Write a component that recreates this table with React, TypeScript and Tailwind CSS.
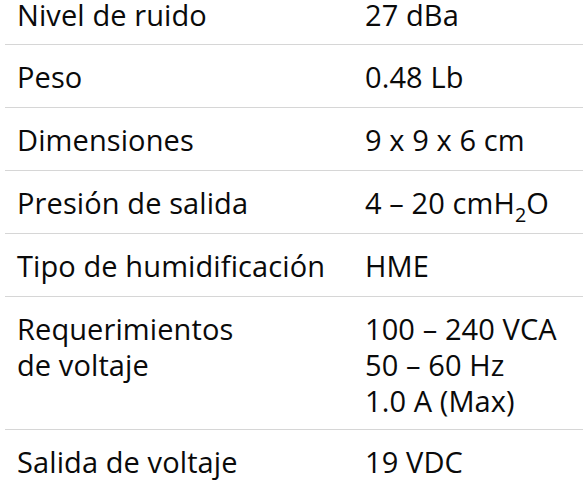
const specs: { label: string[]; value: React.ReactNode[] }[] = [
  { label: ['Nivel de ruido'], value: ['27 dBa'] },
  { label: ['Peso'], value: ['0.48 Lb'] },
  { label: ['Dimensiones'], value: ['9 x 9 x 6 cm'] },
  {
    label: ['Presión de salida'],
    value: [
      <>
        4 – 20 cmH<sub className="text-[0.68em] align-[-0.15em]">2</sub>O
      </>,
    ],
  },
  { label: ['Tipo de humidificación'], value: ['HME'] },
  {
    label: ['Requerimientos', 'de voltaje'],
    value: ['100 – 240 VCA', '50 – 60 Hz', '1.0 A (Max)'],
  },
  { label: ['Salida de voltaje'], value: ['19 VDC'] },
];

export default function App() {
  return (
    <div className="w-[583px] h-[481px] overflow-hidden bg-white text-[#0a0a0a] font-['Open_Sans',sans-serif]">
      <div className="pl-[5px]">
        {specs.map((row, i) => {
          // first row is cropped at the top of the screenshot
          const pad =
            i === 0
              ? 'pt-0 pb-[15px] leading-[29px]'
              : row.label.length > 1
                ? 'pt-[14px] pb-[10px] leading-[36px]'
                : 'pt-[14px] pb-[12px] leading-[36px]';
          return (
            <div
              key={i}
              className={`grid grid-cols-[360px_1fr] border-b border-[#d6d6d6] text-[29px] tracking-[0.1px] ${pad}`}
            >
              <div className="pl-[12px]">
                {row.label.map((l, j) => (
                  <div key={j}>{l}</div>
                ))}
              </div>
              <div>
                {row.value.map((v, j) => (
                  <div key={j}>{v}</div>
                ))}
              </div>
            </div>
          );
        })}
      </div>
    </div>
  );
}
